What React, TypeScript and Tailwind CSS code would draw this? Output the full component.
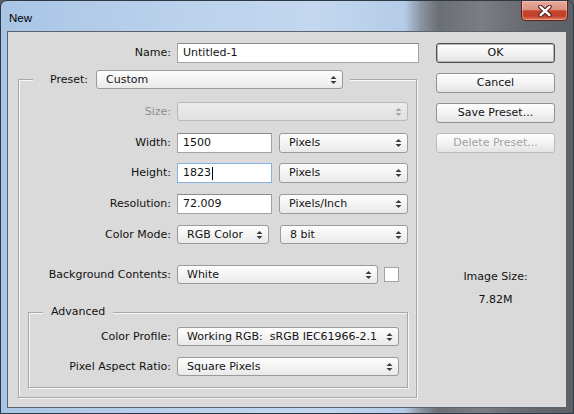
import React from "react";

const font = "font-['DejaVu_Sans',sans-serif] text-[11px] leading-[14px]";

function Arrows({ disabled }: { disabled?: boolean }) {
  return (
    <svg width="7" height="10" viewBox="0 0 7 10" className="shrink-0">
      <polygon points="0.5,4 3.5,1 6.5,4" fill={disabled ? "#a3a3a3" : "#3c3c3c"} />
      <polygon points="0.5,6 3.5,9 6.5,6" fill={disabled ? "#a3a3a3" : "#3c3c3c"} />
    </svg>
  );
}

function Select({
  value,
  className,
  disabled,
}: {
  value?: string;
  className: string;
  disabled?: boolean;
}) {
  return (
    <div
      className={
        "flex items-center justify-between rounded-[3px] border pl-[9px] pr-[5px] " +
        (disabled
          ? "border-[#b9b9b9] bg-[linear-gradient(#ececec,#e0e0e0)] "
          : "border-[#9a9a9a] bg-[linear-gradient(#fdfdfd,#f4f4f4_50%,#e9e9e9)] ") +
        className
      }
    >
      <span className="whitespace-pre text-[#141414]">{value ?? ""}</span>
      <Arrows disabled={disabled} />
    </div>
  );
}

function Input({
  value,
  className,
  focused,
}: {
  value: string;
  className: string;
  focused?: boolean;
}) {
  return (
    <div
      className={
        "flex items-center bg-white pl-[5px] border " +
        (focused ? "border-[#84b3e2] " : "border-[#a3a3a3] border-t-[#8a8a8a] ") +
        className
      }
    >
      <span className="text-[#111]">{value}</span>
      {focused && <span className="ml-px h-[13px] w-px bg-black" />}
    </div>
  );
}

function Button({
  label,
  isDefault,
  disabled,
}: {
  label: string;
  isDefault?: boolean;
  disabled?: boolean;
}) {
  return (
    <div
      className={
        "flex h-[20px] w-[119px] items-center justify-center rounded-[3px] border bg-[linear-gradient(#fefefe,#f3f3f3_50%,#e4e4e4)] " +
        (isDefault
          ? "border-[#4f4f4f] shadow-[inset_0_0_0_1px_#b4b4b4] text-[#111]"
          : disabled
            ? "border-[#bcbcbc] text-[#a2a2a2] bg-[linear-gradient(#f4f4f4,#e6e6e6)]"
            : "border-[#929292] text-[#111]")
      }
    >
      {label}
    </div>
  );
}

function Row({
  label,
  labelW,
  mt,
  h,
  dim,
  children,
}: {
  label: string;
  labelW: string;
  mt: string;
  h: string;
  dim?: boolean;
  children: React.ReactNode;
}) {
  return (
    <div className={"flex items-center " + mt + " " + h}>
      <div className={"text-right " + labelW + (dim ? " text-[#8e8e8e]" : " text-[#111]")}>{label}</div>
      <div className="ml-[6px] flex h-full items-center">{children}</div>
    </div>
  );
}

function CloseButton() {
  return (
    <div className="mr-[5px] flex h-[20px] w-[47px] items-center justify-center rounded-b-[5px] border border-t-0 border-[#5e2219] bg-[linear-gradient(#e9aa9c_0%,#dc9282_45%,#c5452c_52%,#c1402a_78%,#dc7a5f_100%)] shadow-[inset_0_0_0_1px_rgba(255,210,200,0.45)]">
      <svg width="14" height="12" viewBox="0 0 14 12">
        <path d="M2.5 1.8 L11.5 10.2 M11.5 1.8 L2.5 10.2" stroke="#4a1a12" strokeWidth="4.4" strokeLinecap="round" />
        <path d="M2.5 1.8 L11.5 10.2 M11.5 1.8 L2.5 10.2" stroke="#ffffff" strokeWidth="2.4" strokeLinecap="round" />
      </svg>
    </div>
  );
}

export default function App() {
  return (
    <div className={"h-[414px] w-[574px] overflow-hidden bg-[#5b5f64] " + font}>
      <div className="flex h-[414px] w-[574px] flex-col rounded-t-[7px] border border-[#2e3946] bg-[linear-gradient(90deg,#a9c5e5_0%,#bcd3ec_35%,#c3d8ef_55%,#b4cce8_70.5%,#8a939d_73.5%,#6b6f74_76.5%,#7a7e83_84%,#66696e_92%,#5d6065_100%)]">
        {/* title bar */}
        <div className="flex h-[30px] items-start justify-between">
          <span className="ml-[8px] mt-[10px] font-['Liberation_Sans',sans-serif] text-[11.5px] leading-[14px] text-black">
            New
          </span>
          <CloseButton />
        </div>

        {/* client area */}
        <div className="mx-[6px] flex h-[377px] border border-[#59636f] bg-[#dadada]">
          {/* left column */}
          <div className="flex w-[411px] flex-col">
            <div className="mt-[11px] flex h-[20px] items-center">
              <div className="w-[163px] text-right text-[#111]">Name:</div>
              <Input value="Untitled-1" className="ml-[6px] h-[20px] w-[242px]" />
            </div>

            {/* preset group */}
            <div className="ml-[10px] mt-[16px] flex h-[319px] w-[399px] flex-col border border-[#a7a7a7] shadow-[inset_1px_1px_0_#f6f6f6,1px_1px_0_#f6f6f6]">
              <div className="-mt-[10px] ml-[14px] flex h-[19px] w-fit items-center bg-[#dadada] pl-[17px] pr-[7px]">
                <div className="w-[46px] text-[#111]">Preset:</div>
                <Select value="Custom" className="h-[19px] w-[247px]" />
              </div>

              <Row label="Size:" labelW="w-[152px]" mt="mt-[13px]" h="h-[19px]" dim>
                <Select disabled className="h-[19px] w-[231px]" />
              </Row>
              <Row label="Width:" labelW="w-[152px]" mt="mt-[12px]" h="h-[20px]">
                <Input value="1500" className="h-[20px] w-[95px]" />
                <Select value="Pixels" className="ml-[7px] h-[20px] w-[129px]" />
              </Row>
              <Row label="Height:" labelW="w-[152px]" mt="mt-[10px]" h="h-[20px]">
                <Input value="1823" focused className="h-[20px] w-[95px]" />
                <Select value="Pixels" className="ml-[7px] h-[20px] w-[129px]" />
              </Row>
              <Row label="Resolution:" labelW="w-[152px]" mt="mt-[11px]" h="h-[20px]">
                <Input value="72.009" className="h-[20px] w-[95px]" />
                <Select value="Pixels/Inch" className="ml-[7px] h-[20px] w-[129px]" />
              </Row>
              <Row label="Color Mode:" labelW="w-[152px]" mt="mt-[11px]" h="h-[19px]">
                <Select value="RGB Color" className="h-[19px] w-[92px]" />
                <Select value="8 bit" className="ml-[11px] h-[19px] w-[128px]" />
              </Row>
              <Row label="Background Contents:" labelW="w-[152px]" mt="mt-[21px]" h="h-[19px]">
                <Select value="White" className="h-[19px] w-[201px]" />
                <div className="ml-[6px] h-[15px] w-[15px] border border-[#a3a3a3] bg-white" />
              </Row>

              {/* advanced group */}
              <div className="ml-[9px] mt-[28px] flex h-[76px] w-[380px] flex-col border border-[#a7a7a7] shadow-[inset_1px_1px_0_#f6f6f6,1px_1px_0_#f6f6f6]">
                <div className="-mt-[8px] ml-[14px] w-fit bg-[#dadada] px-[8px] text-[#111]">Advanced</div>
                <Row label="Color Profile:" labelW="w-[142px]" mt="mt-[8px]" h="h-[19px]">
                  <Select value="Working RGB:  sRGB IEC61966-2.1" className="h-[19px] w-[222px]" />
                </Row>
                <Row label="Pixel Aspect Ratio:" labelW="w-[142px]" mt="mt-[11px]" h="h-[19px]">
                  <Select value="Square Pixels" className="h-[19px] w-[222px]" />
                </Row>
              </div>
            </div>
          </div>

          {/* right column */}
          <div className="ml-[17px] flex w-[119px] flex-col">
            <div className="mt-[11px]">
              <Button label="OK" isDefault />
            </div>
            <div className="mt-[10px]">
              <Button label="Cancel" />
            </div>
            <div className="mt-[10px]">
              <Button label="Save Preset..." />
            </div>
            <div className="mt-[10px]">
              <Button label="Delete Preset..." disabled />
            </div>
            <div className="mt-[117px] text-center text-[#111]">Image Size:</div>
            <div className="mt-[9px] text-center text-[#111]">7.82M</div>
          </div>
        </div>
      </div>
    </div>
  );
}
